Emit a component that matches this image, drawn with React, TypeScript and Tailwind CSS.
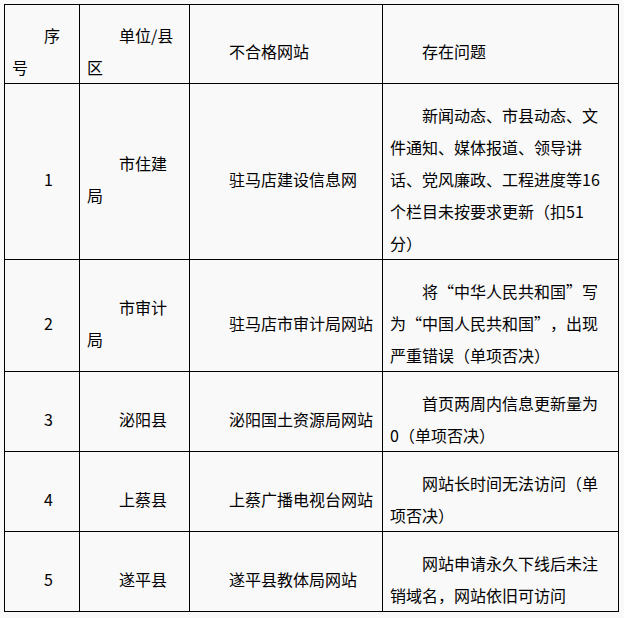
// 不合格网站 通报表 — Word 에서 붙여넣은 표 모양 그대로 (각 칸 첫 줄 2em 들여쓰기)

type Row = { no: string; unit: string; site: string; issue: string };

const rows: Row[] = [
  {
    no: '1',
    unit: '市住建局',
    site: '驻马店建设信息网',
    issue: '新闻动态、市县动态、文件通知、媒体报道、领导讲话、党风廉政、工程进度等16个栏目未按要求更新（扣51分）',
  },
  {
    no: '2',
    unit: '市审计局',
    site: '驻马店市审计局网站',
    issue: '将“中华人民共和国”写为“中国人民共和国”，出现严重错误（单项否决）',
  },
  { no: '3', unit: '泌阳县', site: '泌阳国土资源局网站', issue: '首页两周内信息更新量为0（单项否决）' },
  { no: '4', unit: '上蔡县', site: '上蔡广播电视台网站', issue: '网站长时间无法访问（单项否决）' },
  { no: '5', unit: '遂平县', site: '遂平县教体局网站', issue: '网站申请永久下线后未注销域名，网站依旧可访问' },
];

function Cell({ children, head, last }: { children: React.ReactNode; head?: boolean; last?: boolean }) {
  const Tag = head ? 'th' : 'td';
  return (
    <Tag
      className={`border border-black py-0 pl-[7px] align-middle text-left font-normal ${
        last ? 'pr-[12px]' : 'pr-[7px]'
      }`}
    >
      <p
        className={`indent-8 leading-8 [text-spacing-trim:space-all] ${head ? 'mt-[14px]' : 'mt-[15px]'}`}
      >
        {children}
      </p>
    </Tag>
  );
}

export default function App() {
  return (
    <div className="min-h-[618px] w-[624px] bg-[#f9f9f9] p-1 font-['Noto_Sans_CJK_SC','Noto_Sans',sans-serif] text-[16px] text-black">
      <table className="w-[614px] table-fixed border-collapse">
        <colgroup>
          <col className="w-[75px]" />
          <col className="w-[110px]" />
          <col className="w-[193px]" />
          <col className="w-[236px]" />
        </colgroup>
        <thead>
          <tr>
            <Cell head>序号</Cell>
            <Cell head>单位/县区</Cell>
            <Cell head>不合格网站</Cell>
            <Cell head last>
              存在问题
            </Cell>
          </tr>
        </thead>
        <tbody>
          {rows.map((r) => (
            <tr key={r.no}>
              <Cell>{r.no}</Cell>
              <Cell>{r.unit}</Cell>
              <Cell>{r.site}</Cell>
              <Cell last>{r.issue}</Cell>
            </tr>
          ))}
        </tbody>
      </table>
    </div>
  );
}
